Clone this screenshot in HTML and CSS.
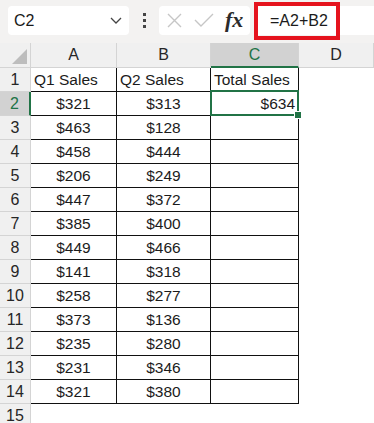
FILE: index.html
```html
<!DOCTYPE html>
<html lang="en">
<head>
    <meta charset="UTF-8">
    <title>Sheet</title>
    <link rel="stylesheet" href="styles.css">
</head>
<body>
    <div class="topbar">
        <div class="namebox">
            <span>C2</span>
            <svg class="chev" width="12" height="7" viewBox="0 0 12 7"><path d="M1 1 L6 6 L11 1" fill="none" stroke="#444" stroke-width="1.3"/></svg>
        </div>
        <div class="dots"><i></i><i></i><i></i></div>
        <div class="fnbox">
            <svg width="15" height="15" viewBox="0 0 15 15"><path d="M1 1 L14 14 M14 1 L1 14" stroke="#c6c6c6" stroke-width="1.4"/></svg>
            <svg width="20" height="15" viewBox="0 0 20 15"><path d="M1 7 L7 13 L19 1" fill="none" stroke="#c6c6c6" stroke-width="1.4"/></svg>
            <span class="fx">fx</span>
        </div>
        <div class="formula">
            <span class="ftext">=A2+B2</span>
            <div class="mark"></div>
        </div>
    </div>

    <div class="sheet" id="sheet">
        <div class="hd corner"><div class="tri"></div></div>
        <div class="hd col">A</div>
        <div class="hd col">B</div>
        <div class="hd col sel">C</div>
        <div class="hd col">D</div>
    </div>

    <script>
        let data = [
            ["Q1 Sales", "Q2 Sales", "Total Sales"],
            ["$321", "$313", "$634"],
            ["$463", "$128", ""],
            ["$458", "$444", ""],
            ["$206", "$249", ""],
            ["$447", "$372", ""],
            ["$385", "$400", ""],
            ["$449", "$466", ""],
            ["$141", "$318", ""],
            ["$258", "$277", ""],
            ["$373", "$136", ""],
            ["$235", "$280", ""],
            ["$231", "$346", ""],
            ["$321", "$380", ""]
        ]
        let sheet = document.getElementById("sheet")
        for (let r = 0; r < 15; r++) {
            let rh = document.createElement("div")
            rh.className = "hd row" + (r == 1 ? " sel" : "")
            rh.textContent = r + 1
            sheet.appendChild(rh)
            for (let c = 0; c < 4; c++) {
                let cell = document.createElement("div")
                cell.className = "cell"
                if (r < 14 && c < 3) {
                    cell.className += " data"
                    cell.textContent = data[r][c]
                    if (r == 0) cell.className += " left"
                    else if (c == 2) cell.className += " right"
                    if (r == 1 && c == 2) cell.className += " active"
                }
                sheet.appendChild(cell)
            }
        }
    </script>
</body>
</html>
```

FILE: styles.css
```css
body{
    margin: 0;
    width: 374px;
    height: 423px;
    overflow: hidden;
    font-family: "Liberation Sans", Arial, sans-serif;
    color: #1b1b1b;
    background: #fff;
}
.topbar{
    height: 43px;
    background: #f3f2f1;
    display: flex;
    align-items: center;
    box-sizing: border-box;
    padding: 0 0 2px 8px;
}
.namebox{
    width: 121px;
    height: 29px;
    background: #fff;
    border-radius: 4px;
    display: flex;
    align-items: center;
    justify-content: space-between;
    padding: 0 7px 0 6px;
    box-sizing: border-box;
    font-size: 16px;
}
.namebox span{
    color: #1a1a1a;
}
.dots{
    width: 30px;
    display: flex;
    flex-direction: column;
    align-items: center;
    gap: 3px;
}
.dots i{
    width: 3px;
    height: 3px;
    background: #444;
}
.fnbox{
    width: 91px;
    height: 29px;
    background: #fff;
    border-radius: 4px;
    display: flex;
    align-items: center;
    gap: 12px;
    padding-left: 8px;
    box-sizing: border-box;
}
.fx{
    font-family: "Liberation Serif", serif;
    font-style: italic;
    font-weight: bold;
    font-size: 22px;
    color: #2b2b2b;
    margin-left: -1px;
    margin-top: -2px;
}
.formula{
    flex: 1;
    height: 29px;
    margin-left: 6px;
    background: #fff;
    position: relative;
    display: flex;
    align-items: center;
}
.ftext{
    padding-left: 14px;
    font-size: 16px;
}
.mark{
    position: absolute;
    left: -2px;
    top: -4px;
    width: 86px;
    height: 38px;
    border: 4px solid #e5131d;
    box-sizing: border-box;
}
.sheet{
    display: grid;
    grid-template-columns: 31px 86px 94px 88px 1fr;
    grid-template-rows: 25px repeat(15, 24px);
    font-size: 15.5px;
}
.hd{
    background: #f0f0f0;
    color: #262626;
    display: flex;
    align-items: center;
    justify-content: center;
    box-sizing: border-box;
    border-right: 1px solid #d4d4d4;
    border-bottom: 1px solid #d4d4d4;
    font-size: 16px;
}
.corner{
    position: relative;
}
.tri{
    position: absolute;
    right: 3px;
    bottom: 3px;
    width: 0;
    height: 0;
    border-left: 15px solid transparent;
    border-bottom: 15px solid #bdbdbd;
}
.hd.col.sel{
    background: #d2d2d2;
    color: #217346;
    border-bottom: 2px solid #217346;
}
.hd.row.sel{
    background: #d2d2d2;
    color: #217346;
    border-right: 2px solid #217346;
}
.hd.row{
    padding-top: 1px;
}
.cell{
    box-sizing: border-box;
    display: flex;
    align-items: center;
    justify-content: center;
    padding: 1px 3px 0 3px;
    white-space: nowrap;
}
.cell.data{
    border-right: 1px solid #111;
    border-bottom: 1px solid #111;
}
.cell.left{
    justify-content: flex-start;
}
.cell.right{
    justify-content: flex-end;
}
.cell.active{
    position: relative;
}
.cell.active::after{
    content: "";
    position: absolute;
    left: -1px;
    top: -2px;
    right: -1px;
    bottom: -1px;
    border: 2px solid #217346;
}
.cell.active::before{
    content: "";
    position: absolute;
    right: -4px;
    bottom: -4px;
    width: 6px;
    height: 6px;
    background: #217346;
    border: 1px solid #fff;
    z-index: 2;
}
```
